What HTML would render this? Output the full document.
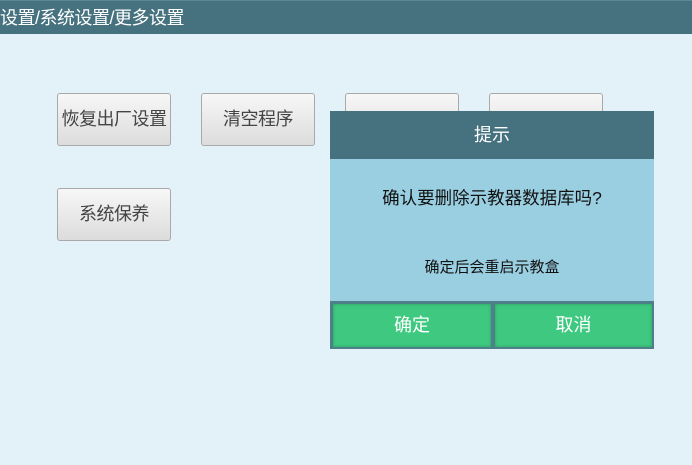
<!DOCTYPE html>
<html><head><meta charset="utf-8"><style>
body{margin:0;width:692px;height:465px;background:#e3f2f8;position:relative;overflow:hidden;font-family:"Liberation Sans","Noto Sans CJK SC",sans-serif}
.hd{position:absolute;left:0;top:0;width:692px;height:34px;background:#46717f;color:#fff;font-size:18px;line-height:34px;padding-left:0;border-top:1px solid #5a8794;box-sizing:border-box;letter-spacing:-0.5px}
.b{position:absolute;width:114px;height:53px;box-sizing:border-box;border:1px solid #a9a9a9;border-radius:3px;background:linear-gradient(#f7f7f7,#dcdcdc);color:#444;font-size:18px;text-align:center;line-height:51px;letter-spacing:-0.5px}
.dlg{position:absolute;left:330px;top:111px;width:324px;height:238px;background:#9acfe2}
.dh{height:48px;background:#46717f;color:#fff;text-align:center;line-height:48px;font-size:18px}
.q{position:absolute;top:74px;width:100%;text-align:center;font-size:17.5px;color:#111}
.s{position:absolute;top:145px;width:100%;text-align:center;font-size:15px;color:#111}
.br{position:absolute;top:190px;left:0;width:324px;height:48px;background:#4e8089}
.g{position:absolute;top:3px;height:43px;background:#3fc980;color:#fff;font-size:18px;text-align:center;line-height:43px;box-shadow:inset 0 0 3px #2c9a5e}
</style></head><body>
<div class="hd">设置/系统设置/更多设置</div>
<div class="b" style="left:57px;top:93px">恢复出厂设置</div>
<div class="b" style="left:201px;top:93px">清空程序</div>
<div class="b" style="left:345px;top:93px"></div>
<div class="b" style="left:489px;top:93px"></div>
<div class="b" style="left:57px;top:188px">系统保养</div>
<div class="dlg">
<div class="dh">提示</div>
<div class="q">确认要删除示教器数据库吗?</div>
<div class="s">确定后会重启示教盒</div>
<div class="br"><div class="g" style="left:3px;width:158px">确定</div><div class="g" style="left:165px;width:157px">取消</div></div>
</div>
</body></html>
